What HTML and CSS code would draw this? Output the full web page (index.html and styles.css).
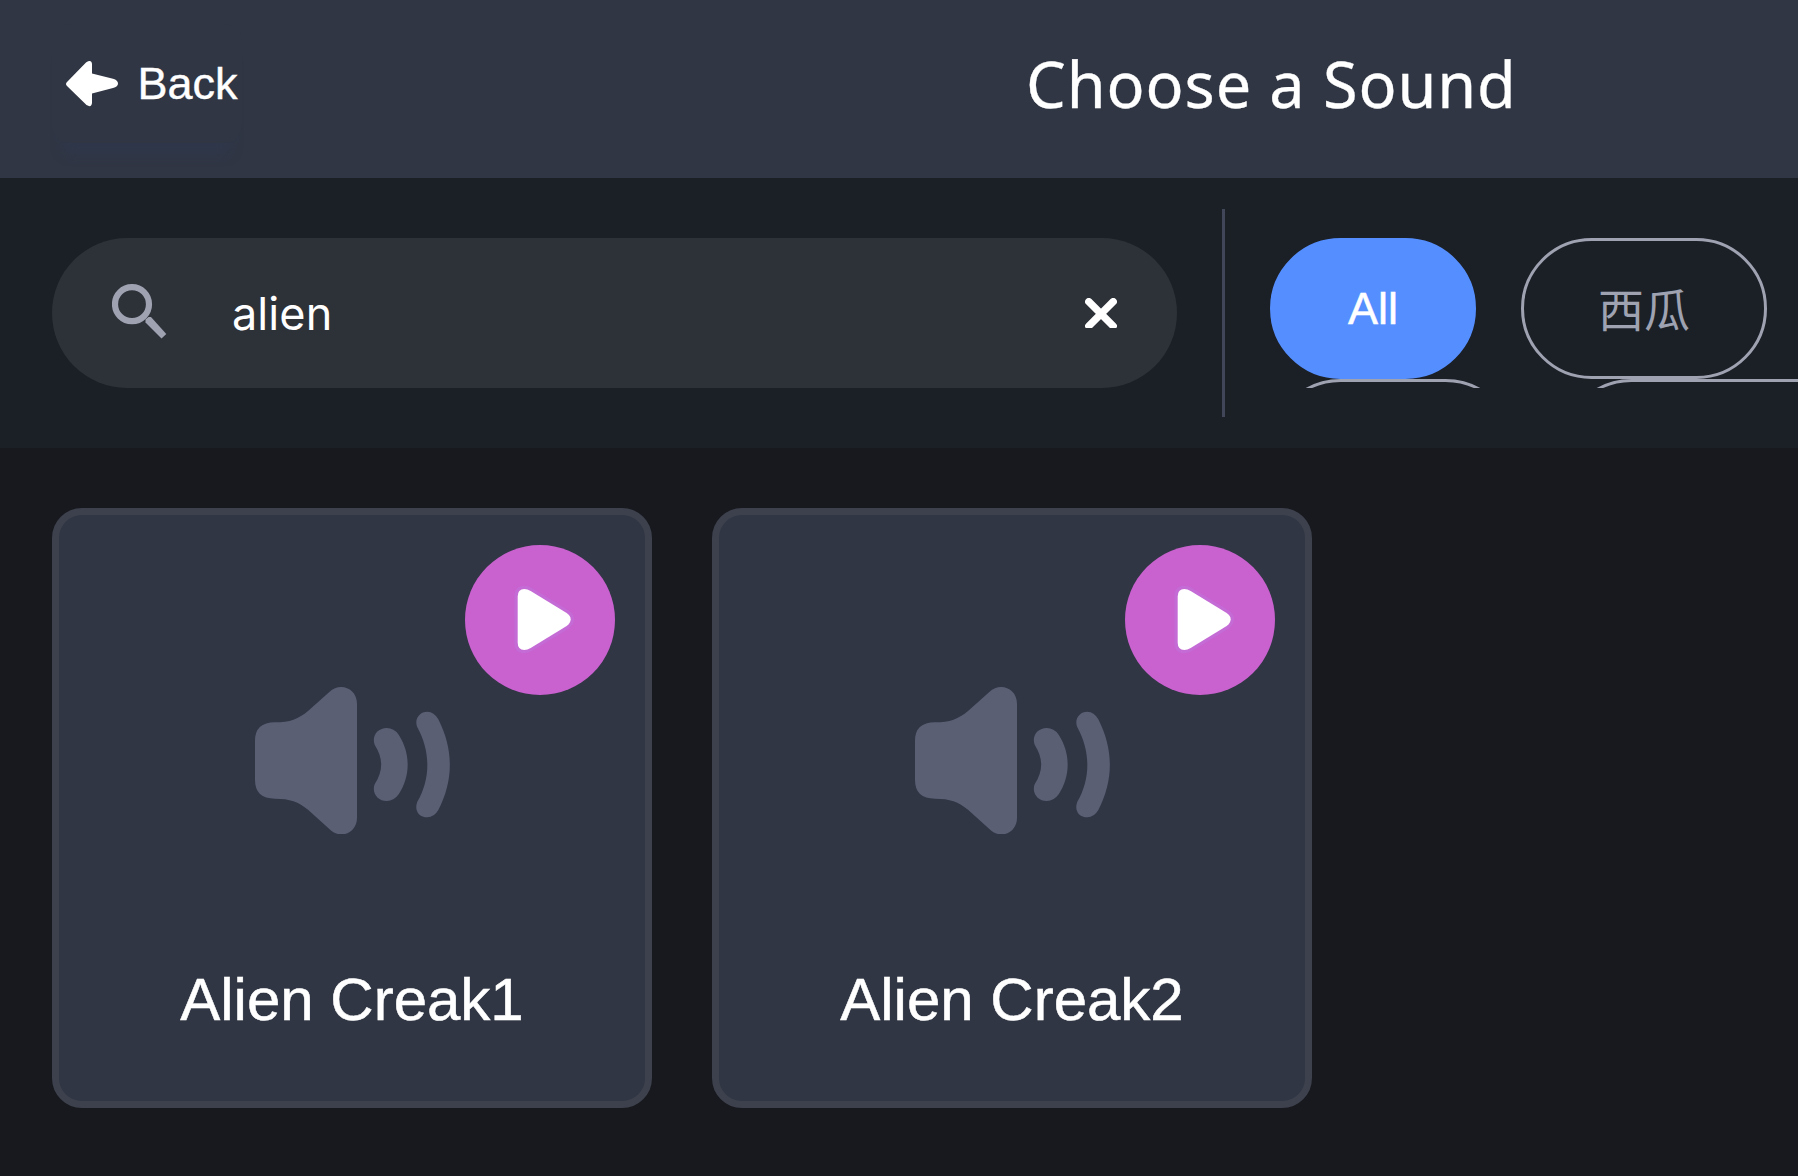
FILE: index.html
```html
<!DOCTYPE html>
<html lang="en">
<head>
<meta charset="utf-8">
<title>Choose a Sound</title>
<link rel="stylesheet" href="styles.css">
</head>
<body>
<svg class="defs" width="0" height="0">
  <symbol id="speaker" viewBox="75 51 585 441">
    <path d="M75 213Q75 157 135 157C180 157 205 147 235 122L298 66C330 35 381 55 381 101V443C381 490 330 510 298 477L235 420C205 395 180 386 135 386Q75 386 75 330Z"/>
    <path d="M434 224C424 196 445 174 470 174Q492 174 506 194C542 250 542 316 506 373Q492 393 470 393C445 393 424 370 434 343C460 302 460 265 434 224Z"/>
    <path d="M562 172C552 148 568 125 592 125Q612 125 625 148C671 240 671 330 625 420Q612 442 592 442C566 442 552 420 562 395C602 325 602 245 562 172Z"/>
  </symbol>
  <symbol id="play" viewBox="75 165 450 450">
    <path d="M233 320Q233 297 253 297Q262 297 272 303L380 369Q392 377 392 388Q392 399 380 408L272 474Q262 480 253 480Q233 480 233 457Z"/>
  </symbol>
</svg>
<header class="header">
  <button class="back">
    <svg width="52" height="46" viewBox="66 61 52 46"><path fill="#fff" d="M67 82L86 62.5Q91.500 59 92 64V73.500L113 78.800Q118 80.300 118 83.600Q118 87 113 88L92 93.500V103Q91.500 108 86.500 105L67 86Q65 84 67 82Z"/></svg>
    <span>Back</span>
  </button>
  <h1 class="title">Choose a Sound</h1>
</header>
<div class="filters">
  <div class="search">
    <svg class="search-icon" width="55" height="55" viewBox="112 284 55 55"><circle cx="132" cy="304.200" r="17" fill="none" stroke="#9ea2b1" stroke-width="6.200"/><path fill="#9ea2b1" d="M148.500 317H151L166.300 334L161.500 338.500L145.500 322.500V319.500Z"/></svg>
    <span class="query">alien</span>
    <svg width="32" height="30" viewBox="1085 298 32 30"><path d="M1088.800 301.700L1113.200 326M1113.200 301.700L1088.800 326" stroke="#fff" stroke-width="7.400" stroke-linecap="round"/></svg>
  </div>
  <div class="divider"></div>
  <div class="tags">
    <div class="tag-row">
      <span class="tag active">All</span>
      <span class="tag cjk">西瓜</span>
    </div>
    <div class="tag-row">
      <span class="tag short"></span>
      <span class="tag long"></span>
    </div>
  </div>
</div>
<main class="grid">
  <div class="card">
    <div class="play"><svg width="150" height="150"><use href="#play" class="halo"/><use href="#play"/></svg></div>
    <svg class="speaker" width="195" height="147"><use href="#speaker"/></svg>
    <span class="label">Alien Creak1</span>
  </div>
  <div class="card">
    <div class="play"><svg width="150" height="150"><use href="#play" class="halo"/><use href="#play"/></svg></div>
    <svg class="speaker" width="195" height="147"><use href="#speaker"/></svg>
    <span class="label">Alien Creak2</span>
  </div>
</main>
</body>
</html>
```
FILE: styles.css
```css
* { box-sizing: border-box; }
body {
  margin: 0;
  height: 1176px;
  overflow: hidden;
  background: #18191e;
  color: #fff;
  font-family: "Liberation Sans", Arial, sans-serif;
  display: flex;
  flex-direction: column;
}
svg { display: block; flex: none; }
.defs { position: absolute; }
.header {
  flex: none;
  height: 178px;
  padding-left: 52px;
  display: flex;
  align-items: flex-start;
  background: #303644;
}
.back {
  width: 190px;
  height: 119px;
  margin: 24px 0 0;
  padding: 0 0 0 14px;
  border: 0;
  border-radius: 18px;
  display: flex;
  align-items: center;
  gap: 19.5px;
  background: #303644;
  color: #fff;
  font: 45px/50px "Liberation Sans", Arial, sans-serif;
  -webkit-text-stroke: .4px #fff;
  box-shadow: 0 22px 12px -12px rgba(46, 56, 80, .6);
}
.title {
  margin: 41px 0 0 784px;
  font: 400 63px/86px "Noto Sans", "Open Sans", sans-serif;
  letter-spacing: .9px;
  white-space: nowrap;
  -webkit-text-stroke: .3px #fff;
}
.filters {
  flex: none;
  height: 270px;
  padding-left: 52px;
  display: flex;
  align-items: center;
  background: #1b1f26;
}
.search {
  width: 1125px;
  height: 150px;
  padding: 0 60px;
  border-radius: 75px;
  display: flex;
  align-items: center;
  background: #2d3138;
}
.search-icon { margin-bottom: 3px; }
.query {
  flex: 1;
  margin-left: 65px;
  padding-top: 1px;
  font: 45px/54px Inter, sans-serif;
  letter-spacing: .1px;
}
.divider {
  width: 3px;
  height: 208px;
  margin: 0 45px;
  background: #414659;
}
.tags {
  flex: 1;
  height: 150px;
  overflow: hidden;
}
.tag-row { display: flex; gap: 45px; }
.tag {
  flex: none;
  height: 141px;
  padding: 0 75px;
  border: 3px solid #9ea2b1;
  border-radius: 70.5px;
  display: flex;
  align-items: center;
  color: #9ea2b1;
  font-size: 45px;
  line-height: 50px;
}
.tag.active {
  background: #558fff;
  border-color: #558fff;
  color: #fff;
  -webkit-text-stroke: .5px #fff;
}
.tag.cjk {
  width: 246px;
  padding: 5px 74px 0;
  font-family: "Liberation Sans", "Noto Sans CJK SC", sans-serif;
  font-size: 46px;
  white-space: nowrap;
}
.tag.short { width: 246px; }
.tag.long { width: 336px; }
.grid {
  padding: 60px 52px;
  display: flex;
  gap: 60px;
}
.card {
  position: relative;
  width: 600px;
  height: 600px;
  padding-top: 172px;
  border: 7px solid #3d414d;
  border-radius: 30px;
  display: flex;
  flex-direction: column;
  align-items: center;
  background: #303644;
}
.play {
  position: absolute;
  top: 30px;
  right: 30px;
  border-radius: 50%;
  background: #c961cf;
  fill: #fff;
}
.halo { fill: #c46bd5; stroke: #c46bd5; stroke-width: 20px; stroke-linejoin: round; }
.speaker { fill: #5b5f74; }
.label {
  margin-top: 132px;
  font-size: 60px;
  line-height: 67px;
  -webkit-text-stroke: .5px #fff;
}
```
